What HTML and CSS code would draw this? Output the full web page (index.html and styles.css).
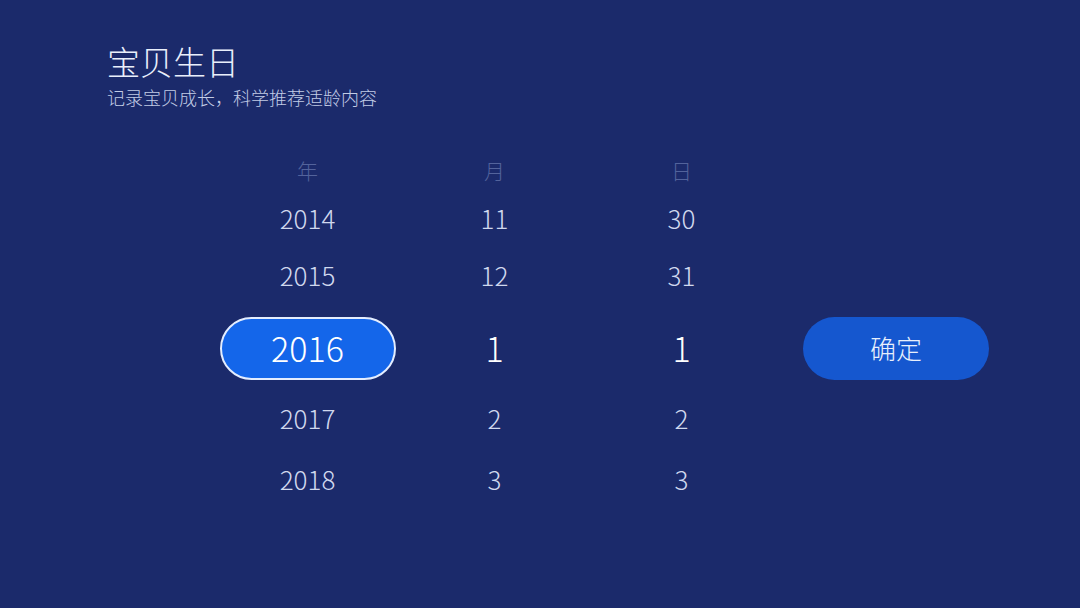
FILE: index.html
```html
<!DOCTYPE html>
<html lang="zh-CN">
<head>
<meta charset="utf-8">
<title>宝贝生日</title>
<link rel="stylesheet" href="styles.css">
</head>
<body>
<div class="page">
  <header class="head">
    <h1 class="title">宝贝生日</h1>
    <p class="subtitle">记录宝贝成长，科学推荐适龄内容</p>
  </header>
  <main class="picker-row">
    <div class="picker">
      <div class="col">
        <div class="cell label">年</div>
        <div class="cell r1">2014</div>
        <div class="cell r2">2015</div>
        <div class="cell sel pill">2016</div>
        <div class="cell r4">2017</div>
        <div class="cell r5">2018</div>
      </div>
      <div class="col">
        <div class="cell label">月</div>
        <div class="cell r1">11</div>
        <div class="cell r2">12</div>
        <div class="cell sel">1</div>
        <div class="cell r4">2</div>
        <div class="cell r5">3</div>
      </div>
      <div class="col">
        <div class="cell label">日</div>
        <div class="cell r1">30</div>
        <div class="cell r2">31</div>
        <div class="cell sel">1</div>
        <div class="cell r4">2</div>
        <div class="cell r5">3</div>
      </div>
    </div>
    <button class="confirm">确定</button>
  </main>
</div>
</body>
</html>
```
FILE: styles.css
```css
html, body {
  margin: 0;
  padding: 0;
}
body {
  width: 1080px;
  height: 608px;
  background: #1b2a6b;
  font-family: "Noto Sans CJK SC", "Noto Sans", sans-serif;
  font-weight: 300;
  overflow: hidden;
}
.page {
  width: 1080px;
  height: 608px;
}
.head {
  padding: 41px 0 0 107px;
}
.title {
  margin: 0;
  font-size: 33px;
  line-height: 40px;
  font-weight: 300;
  color: #e9effb;
}
.subtitle {
  margin: 4px 0 0;
  font-size: 18px;
  line-height: 24px;
  color: #c2cce6;
}
.picker-row {
  display: flex;
  align-items: flex-start;
  padding: 41px 0 0 214px;
}
.picker {
  display: flex;
}
.col {
  width: 187px;
  display: flex;
  flex-direction: column;
  align-items: center;
}
.cell {
  display: flex;
  align-items: center;
  justify-content: center;
  font-size: 26px;
  color: #d0d8ee;
}
.label {
  height: 40px;
  font-size: 21px;
  color: #53639c;
}
.r1 { height: 54px; }
.r2 { height: 60px; }
.r4 { height: 58px; }
.r5 { height: 64px; }
.sel {
  box-sizing: border-box;
  height: 63px;
  margin: 13px 0 8px;
  padding-bottom: 3px;
  font-size: 34px;
  color: #ffffff;
}
.pill {
  width: 176px;
  border: 2px solid #e3edff;
  border-radius: 32px;
  background: #1466ea;
}
.confirm {
  margin: 167px 0 0 28px;
  width: 186px;
  height: 63px;
  border: none;
  border-radius: 32px;
  background: #1557cf;
  color: #e8effc;
  font-family: "Noto Sans CJK SC", sans-serif;
  font-weight: 300;
  font-size: 26px;
  padding: 0 0 2px;
}
```
